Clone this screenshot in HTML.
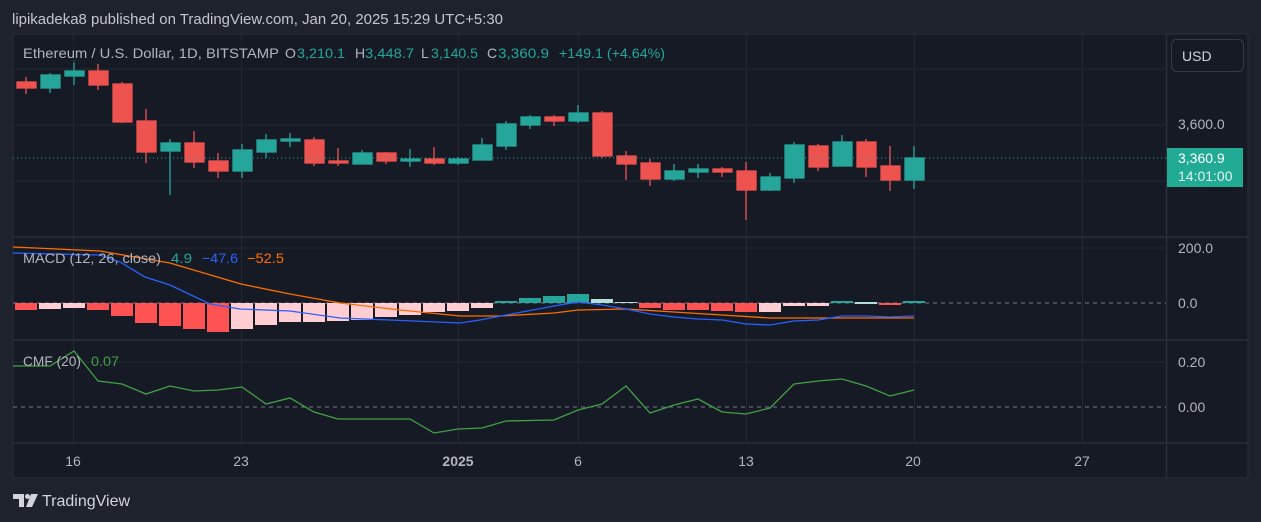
<!DOCTYPE html>
<html><head><meta charset="utf-8"><style>
html,body{margin:0;padding:0;background:#1e222d;width:1261px;height:522px;overflow:hidden;font-family:"Liberation Sans",sans-serif;}
svg{position:absolute;left:0;top:0}
</style></head><body>
<svg width="1261" height="522" xmlns="http://www.w3.org/2000/svg" font-family="Liberation Sans, sans-serif">
<rect width="1261" height="522" fill="#1e222d"/>
<text x="12" y="24" font-size="15" fill="#c3c6ce" textLength="491" lengthAdjust="spacingAndGlyphs">lipikadeka8 published on TradingView.com, Jan 20, 2025 15:29 UTC+5:30</text>
<rect x="13" y="34" width="1235" height="444" fill="#161a25" stroke="#2a2e39" stroke-width="1"/>
<!-- grid -->
<g stroke="#242833" stroke-width="1">
<line x1="13" y1="69" x2="1166" y2="69"/><line x1="13" y1="125" x2="1166" y2="125"/><line x1="13" y1="181" x2="1166" y2="181"/>
<line x1="13" y1="248" x2="1166" y2="248"/><line x1="13" y1="362" x2="1166" y2="362"/>
<line x1="73.5" y1="34" x2="73.5" y2="443"/><line x1="241.5" y1="34" x2="241.5" y2="443"/><line x1="458.5" y1="34" x2="458.5" y2="443"/><line x1="578.5" y1="34" x2="578.5" y2="443"/><line x1="746.5" y1="34" x2="746.5" y2="443"/><line x1="914.5" y1="34" x2="914.5" y2="443"/><line x1="1082.5" y1="34" x2="1082.5" y2="443"/>
</g>
<g stroke="#2a2e39" stroke-width="1.5">
<line x1="13" y1="237" x2="1248" y2="237"/><line x1="13" y1="340" x2="1248" y2="340"/><line x1="13" y1="443" x2="1248" y2="443"/>
<line x1="1166.5" y1="34" x2="1166.5" y2="478"/>
</g>
<!-- candles -->
<g stroke-width="1.3">
<g stroke="#ef5350" fill="#ef5350">
<line x1="26" y1="77" x2="26" y2="94"/><rect x="17" y="82" width="19" height="6"/>
<line x1="98" y1="64" x2="98" y2="90"/><rect x="89" y="71" width="19" height="14"/>
<line x1="122" y1="82" x2="122" y2="123"/><rect x="113" y="84" width="19" height="38"/>
<line x1="146" y1="109" x2="146" y2="163"/><rect x="137" y="121" width="19" height="31"/>
<line x1="194" y1="131" x2="194" y2="168"/><rect x="185" y="143" width="19" height="19"/>
<line x1="218" y1="153" x2="218" y2="178"/><rect x="209" y="161" width="19" height="10"/>
<line x1="314" y1="137" x2="314" y2="166"/><rect x="305" y="140" width="19" height="23"/>
<line x1="338" y1="148" x2="338" y2="166"/><rect x="329" y="161" width="19" height="2"/>
<line x1="386" y1="152" x2="386" y2="164"/><rect x="377" y="153" width="19" height="8"/>
<line x1="434" y1="147" x2="434" y2="165"/><rect x="425" y="159" width="19" height="4"/>
<line x1="554" y1="115" x2="554" y2="126"/><rect x="545" y="117" width="19" height="4"/>
<line x1="602" y1="111" x2="602" y2="158"/><rect x="593" y="113" width="19" height="43"/>
<line x1="626" y1="151" x2="626" y2="180"/><rect x="617" y="156" width="19" height="8"/>
<line x1="650" y1="159" x2="650" y2="186"/><rect x="641" y="163" width="19" height="16"/>
<line x1="722" y1="167" x2="722" y2="177"/><rect x="713" y="169" width="19" height="3"/>
<line x1="746" y1="162" x2="746" y2="220"/><rect x="737" y="171" width="19" height="19"/>
<line x1="818" y1="144" x2="818" y2="171"/><rect x="809" y="146" width="19" height="21"/>
<line x1="866" y1="139" x2="866" y2="177"/><rect x="857" y="142" width="19" height="25"/>
<line x1="890" y1="146" x2="890" y2="191"/><rect x="881" y="166" width="19" height="14"/>
</g>
<g stroke="#26a69a" fill="#26a69a">
<line x1="50" y1="73" x2="50" y2="93"/><rect x="41" y="75" width="19" height="13"/>
<line x1="74" y1="60" x2="74" y2="85"/><rect x="65" y="71" width="19" height="5"/>
<line x1="170" y1="139" x2="170" y2="195"/><rect x="161" y="143" width="19" height="8"/>
<line x1="242" y1="144" x2="242" y2="178"/><rect x="233" y="150" width="19" height="21"/>
<line x1="266" y1="134" x2="266" y2="158"/><rect x="257" y="140" width="19" height="12"/>
<line x1="290" y1="133" x2="290" y2="147"/><rect x="281" y="139" width="19" height="2"/>
<line x1="362" y1="150" x2="362" y2="164"/><rect x="353" y="153" width="19" height="11"/>
<line x1="410" y1="149" x2="410" y2="167"/><rect x="401" y="159" width="19" height="2"/>
<line x1="458" y1="157" x2="458" y2="165"/><rect x="449" y="159" width="19" height="4"/>
<line x1="482" y1="138" x2="482" y2="160"/><rect x="473" y="145" width="19" height="15"/>
<line x1="506" y1="121" x2="506" y2="150"/><rect x="497" y="124" width="19" height="22"/>
<line x1="530" y1="115" x2="530" y2="129"/><rect x="521" y="117" width="19" height="8"/>
<line x1="578" y1="105" x2="578" y2="123"/><rect x="569" y="113" width="19" height="8"/>
<line x1="674" y1="164" x2="674" y2="181"/><rect x="665" y="171" width="19" height="8"/>
<line x1="698" y1="164" x2="698" y2="178"/><rect x="689" y="169" width="19" height="3"/>
<line x1="770" y1="173" x2="770" y2="191"/><rect x="761" y="177" width="19" height="13"/>
<line x1="794" y1="142" x2="794" y2="183"/><rect x="785" y="145" width="19" height="33"/>
<line x1="842" y1="135" x2="842" y2="166"/><rect x="833" y="142" width="19" height="24"/>
<line x1="914" y1="146" x2="914" y2="189"/><rect x="905" y="158" width="19" height="22"/>
</g>
</g>
<line x1="13" y1="158" x2="1166" y2="158" stroke="#26a69a" stroke-width="1" stroke-dasharray="1 3"/>
<!-- legend -->
<rect x="15" y="41" width="655" height="22" fill="#161a25" opacity="0.6"/>
<g font-size="14" fill="#b2b5be">
<text x="23" y="58" textLength="256" lengthAdjust="spacingAndGlyphs">Ethereum / U.S. Dollar, 1D, BITSTAMP</text>
<text x="285" y="58">O</text><text x="297" y="58" fill="#26a69a" textLength="48" lengthAdjust="spacingAndGlyphs">3,210.1</text>
<text x="355" y="58">H</text><text x="365" y="58" fill="#26a69a" textLength="49" lengthAdjust="spacingAndGlyphs">3,448.7</text>
<text x="421" y="58">L</text><text x="431" y="58" fill="#26a69a" textLength="47" lengthAdjust="spacingAndGlyphs">3,140.5</text>
<text x="487" y="58">C</text><text x="498" y="58" fill="#26a69a" textLength="51" lengthAdjust="spacingAndGlyphs">3,360.9</text>
<text x="559" y="58" fill="#26a69a" textLength="106" lengthAdjust="spacingAndGlyphs">+149.1 (+4.64%)</text>
</g>
<!-- MACD -->
<line x1="13" y1="303" x2="1166" y2="303" stroke="#787b86" stroke-dasharray="4 4" stroke-width="1"/>
<g fill="#ff5252">
<rect x="15" y="303" width="22" height="7"/><rect x="87" y="303" width="22" height="7"/><rect x="111" y="303" width="22" height="13"/><rect x="135" y="303" width="22" height="20"/><rect x="159" y="303" width="22" height="23"/><rect x="183" y="303" width="22" height="26"/><rect x="207" y="303" width="22" height="29"/>
<rect x="639" y="303" width="22" height="5"/><rect x="663" y="303" width="22" height="7"/><rect x="687" y="303" width="22" height="7"/><rect x="711" y="303" width="22" height="8"/><rect x="735" y="303" width="22" height="9"/><rect x="879" y="303" width="22" height="2"/>
</g>
<g fill="#ffcdd2">
<rect x="39" y="303" width="22" height="6"/><rect x="63" y="303" width="22" height="5"/><rect x="231" y="303" width="22" height="26"/><rect x="255" y="303" width="22" height="22"/><rect x="279" y="303" width="22" height="19"/><rect x="303" y="303" width="22" height="19"/><rect x="327" y="303" width="22" height="18"/><rect x="351" y="303" width="22" height="17"/><rect x="375" y="303" width="22" height="14"/><rect x="399" y="303" width="22" height="12"/><rect x="423" y="303" width="22" height="9"/><rect x="447" y="303" width="22" height="8"/><rect x="471" y="303" width="22" height="5"/>
<rect x="759" y="303" width="22" height="9"/><rect x="783" y="303" width="22" height="3"/><rect x="807" y="303" width="22" height="3"/>
</g>
<g fill="#26a69a">
<rect x="495" y="301" width="22" height="2"/><rect x="519" y="298" width="22" height="5"/><rect x="543" y="296" width="22" height="7"/><rect x="567" y="294" width="22" height="9"/><rect x="831" y="301" width="22" height="2"/><rect x="903" y="301" width="22" height="2"/>
</g>
<g fill="#b2dfdb"><rect x="591" y="299" width="22" height="4"/><rect x="615" y="302" width="22" height="1"/><rect x="855" y="302" width="22" height="2"/></g>
<polyline fill="none" stroke="#ff6d00" stroke-width="1.3" points="13,247 100,251 170,263 241,284 290,294 340,303 400,310 460,316 500,316 554,313 578,310 626,309 674,312 722,315 770,318 818,318 866,318 914,318"/>
<polyline fill="none" stroke="#2962ff" stroke-width="1.3" points="13,253 100,255 120,262 145,277 170,285 210,304 240,309 290,311 340,318 390,320 460,323 480,320 506,315 554,306 578,302 602,305 626,309 650,314 674,317 698,319 722,320 746,324 770,325 794,321 818,320 842,316 866,316 890,317 914,316"/>
<g font-size="14">
<text x="23" y="263" fill="#b2b5be" textLength="138" lengthAdjust="spacingAndGlyphs">MACD (12, 26, close)</text>
<text x="171" y="263" fill="#26a69a" textLength="21" lengthAdjust="spacingAndGlyphs">4.9</text>
<text x="202" y="263" fill="#2962ff" textLength="36" lengthAdjust="spacingAndGlyphs">−47.6</text>
<text x="247" y="263" fill="#ff6d00" textLength="37" lengthAdjust="spacingAndGlyphs">−52.5</text>
</g>
<!-- CMF -->
<line x1="13" y1="407" x2="1166" y2="407" stroke="#787b86" stroke-dasharray="4 4" stroke-width="1"/>
<polyline fill="none" stroke="#43a047" stroke-width="1.3" points="13,366 50,366 74,351 98,381 122,384 146,394 170,386 194,391 218,390 242,387 266,404 290,398 314,412 338,419 410,419 434,433 458,429 482,428 506,421 554,420 578,410 602,404 626,386 650,413 674,405 698,399 722,412 746,414 770,408 794,384 818,381 842,379 866,386 890,396 914,390"/>
<g font-size="14">
<text x="23" y="366" fill="#b2b5be" textLength="58" lengthAdjust="spacingAndGlyphs">CMF (20)</text>
<text x="91" y="366" fill="#43a047" textLength="28" lengthAdjust="spacingAndGlyphs">0.07</text>
</g>
<!-- axis labels -->
<g font-size="14" fill="#b2b5be">
<text x="1178" y="129">3,600.0</text>
<text x="1178" y="253">200.0</text><text x="1178" y="308">0.0</text>
<text x="1178" y="367">0.20</text><text x="1178" y="412">0.00</text>
<text x="73" y="466" text-anchor="middle">16</text><text x="241" y="466" text-anchor="middle">23</text>
<text x="458" y="466" text-anchor="middle" font-weight="bold">2025</text>
<text x="578" y="466" text-anchor="middle">6</text><text x="746" y="466" text-anchor="middle">13</text>
<text x="913" y="466" text-anchor="middle">20</text><text x="1082" y="466" text-anchor="middle">27</text>
</g>
<rect x="1171.5" y="39.5" width="72" height="32" rx="5" fill="#161a25" stroke="#363a45"/>
<text x="1182" y="61" font-size="14" fill="#d1d4dc">USD</text>
<rect x="1167" y="148" width="76" height="39" fill="#22ab94"/>
<text x="1178" y="163" font-size="14" fill="#ffffff">3,360.9</text>
<text x="1178" y="181" font-size="14" fill="#e0f2f1">14:01:00</text>
<!-- logo -->
<g fill="#d1d4dc">
<path d="M13 494 H24 V507 H19 V499 H13 Z"/>
<circle cx="27.5" cy="496.5" r="2.5"/>
<path d="M31 494 H38 L32 507 H26 Z"/>
</g>
<text x="42" y="506" font-size="16" fill="#d1d4dc">TradingView</text>
</svg>
</body></html>
